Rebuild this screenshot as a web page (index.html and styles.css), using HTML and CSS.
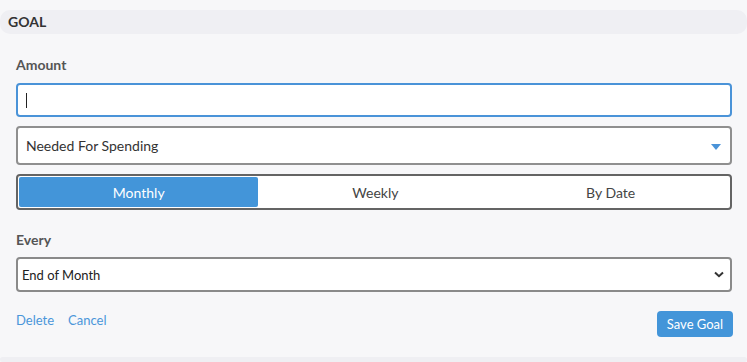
FILE: index.html
```html
<!DOCTYPE html>
<html>
<head>
    <meta charset="UTF-8">
    <title>Goal</title>
    <link rel="stylesheet" href="styles.css">
</head>
<body>
    <div class="section-header">GOAL</div>

    <div class="goal-form">
        <label class="field-label">Amount</label>
        <div class="amount-input"><span class="caret"></span></div>

        <div class="picker">
            <span>Needed For Spending</span>
            <span class="picker-arrow"></span>
        </div>

        <div class="toggle">
            <div class="toggle-item active">Monthly</div>
            <div class="toggle-item">Weekly</div>
            <div class="toggle-item">By Date</div>
        </div>

        <label class="field-label every">Every</label>
        <div class="native-select">
            <span>End of Month</span>
            <svg width="10" height="7" viewBox="0 0 10 7">
                <path d="M1 1.5 L5 5.2 L9 1.5" fill="none" stroke="#333" stroke-width="2"/>
            </svg>
        </div>

        <div class="form-footer">
            <div class="links">
                <a href="#">Delete</a>
                <a href="#">Cancel</a>
            </div>
            <button type="button" class="save-btn">Save Goal</button>
        </div>
    </div>

    <div class="section-header next"></div>
</body>
</html>
```

FILE: styles.css
```css
html, body {
    height: 362px;
    overflow: hidden;
    }
body {
    margin: 0;
    background-color: #f7f7f9;
    font-family: Lato, "Liberation Sans", sans-serif;
    color: #333;
    }
.section-header {
    margin-top: 10px;
    height: 24px;
    line-height: 24px;
    padding-left: 8px;
    background-color: #efeff3;
    border-radius: 10px;
    font-size: 14px;
    font-weight: bold;
    color: #333;
    }
.section-header.next {
    margin-top: 20px;
    height: 5px;
    }
.goal-form {
    padding: 23px 15px 0 16px;
    display: flex;
    flex-direction: column;
    }
.field-label {
    font-size: 14px;
    font-weight: bold;
    line-height: 16px;
    color: #555;
    margin-bottom: 10px;
    }
.field-label.every {
    margin-top: 22px;
    margin-bottom: 9px;
    }
.amount-input {
    height: 30px;
    background: white;
    border: 2px solid #4a93d8;
    border-radius: 4px;
    display: flex;
    align-items: center;
    padding-left: 8px;
    }
.caret {
    width: 1px;
    height: 15px;
    background: #222;
    }
.picker {
    margin-top: 9px;
    height: 35px;
    background: white;
    border: 2px solid #8f8f8f;
    border-radius: 4px;
    display: flex;
    align-items: center;
    justify-content: space-between;
    padding: 0 9px 0 8px;
    font-size: 14px;
    color: #333;
    }
.picker-arrow {
    width: 0;
    height: 0;
    border-left: 5px solid transparent;
    border-right: 5px solid transparent;
    border-top: 6px solid #4a93d8;
    margin-top: 2px;
    }
.toggle {
    margin-top: 9px;
    height: 30px;
    padding: 1px;
    background: white;
    border: 2px solid #646464;
    border-radius: 4px;
    display: flex;
    }
.toggle-item {
    flex: auto;
    display: flex;
    align-items: center;
    justify-content: center;
    font-size: 14px;
    color: #444;
    border-radius: 2px;
    }
.toggle-item.active {
    background-color: #4395d9;
    color: white;
    }
.native-select {
    height: 31px;
    background: white;
    border: 2px solid #8a8a8a;
    border-radius: 4px;
    display: flex;
    align-items: center;
    justify-content: space-between;
    padding: 0 6px 0 4px;
    font-size: 13px;
    color: #222;
    }
.form-footer {
    margin-top: 19px;
    display: flex;
    justify-content: space-between;
    align-items: flex-start;
    }
.links {
    display: flex;
    gap: 14px;
    padding-top: 1px;
    }
.links a {
    font-size: 13px;
    color: #4a96da;
    text-decoration: none;
    }
.save-btn {
    margin-right: -1px;
    height: 26px;
    width: 76px;
    padding: 0;
    border: none;
    border-radius: 4px;
    background-color: #4395d9;
    color: white;
    font-family: Lato, "Liberation Sans", sans-serif;
    font-size: 13px;
    }
```
